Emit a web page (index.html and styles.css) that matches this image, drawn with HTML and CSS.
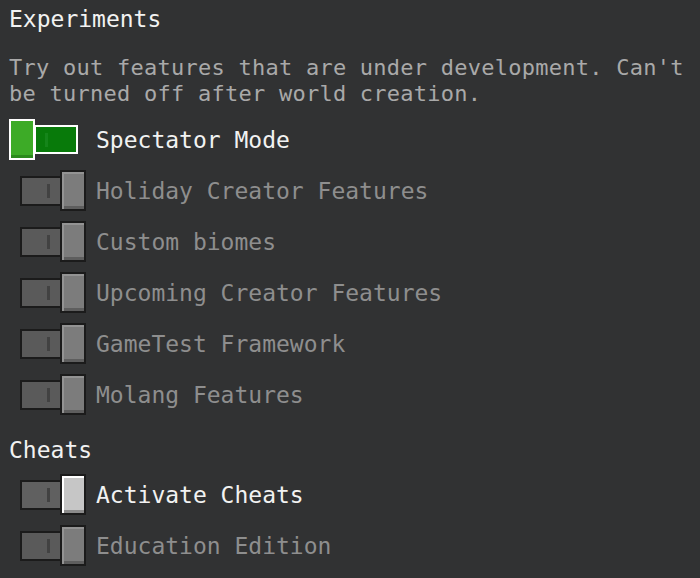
FILE: index.html
```html
<!DOCTYPE html>
<html lang="en">
<head>
    <meta charset="UTF-8">
    <title>World Settings - Experiments</title>
    <link rel="stylesheet" href="styles.css">
</head>
<body>

    <!-- Experiments -->
    <div class="heading">Experiments</div>
    <p class="desc">Try out features that are under development. Can't be turned off after world creation.</p>

    <div class="row">
        <div class="switch on focus"><span class="knob"></span><span class="track"><i></i></span></div>
        <span class="label">Spectator Mode</span>
    </div>
    <div class="row disabled">
        <div class="switch"><span class="track"><i></i></span><span class="knob"></span></div>
        <span class="label">Holiday Creator Features</span>
    </div>
    <div class="row disabled">
        <div class="switch"><span class="track"><i></i></span><span class="knob"></span></div>
        <span class="label">Custom biomes</span>
    </div>
    <div class="row disabled">
        <div class="switch"><span class="track"><i></i></span><span class="knob"></span></div>
        <span class="label">Upcoming Creator Features</span>
    </div>
    <div class="row disabled">
        <div class="switch"><span class="track"><i></i></span><span class="knob"></span></div>
        <span class="label">GameTest Framework</span>
    </div>
    <div class="row disabled">
        <div class="switch"><span class="track"><i></i></span><span class="knob"></span></div>
        <span class="label">Molang Features</span>
    </div>

    <!-- Cheats -->
    <div class="heading cheats">Cheats</div>

    <div class="row">
        <div class="switch"><span class="track"><i></i></span><span class="knob"></span></div>
        <span class="label">Activate Cheats</span>
    </div>
    <div class="row disabled">
        <div class="switch"><span class="track"><i></i></span><span class="knob"></span></div>
        <span class="label">Education Edition</span>
    </div>

</body>
</html>
```

FILE: styles.css
```css
/* Page */
body {
    margin: 0;
    padding: 0 0 0 9px;
    background-color: #313233;
    color: #ffffff;
    font-family: "DejaVu Sans Mono", "Liberation Mono", monospace;
    font-size: 23px;
}

/* Section titles */
.heading {
    line-height: 38px;
    color: #f2f2f2;
}

.heading.cheats {
    margin-top: 11px;
}

.desc {
    margin: 17px 0 7px;
    font-size: 22px;
    line-height: 26px;
    letter-spacing: 0.25px;
    color: #a9a9a9;
    max-width: 690px;
}

/* Toggle rows */
.row {
    display: flex;
    align-items: center;
    height: 51px;
    gap: 9px;
}

.label {
    color: #f2f2f2;
    white-space: nowrap;
}

.row.disabled .label {
    color: #8e8e8e;
}

/* Switch */
.switch {
    width: 78px;
    display: flex;
    align-items: center;
    padding-left: 11px;
    box-sizing: border-box;
}

.switch.on {
    padding-left: 0;
}

.track {
    width: 42px;
    height: 30px;
    box-sizing: border-box;
    border: 2px solid #1b1b1b;
    background-color: #606060;
    display: flex;
    align-items: center;
    justify-content: flex-end;
    padding-right: 10px;
}

.track i {
    width: 3px;
    height: 14px;
    background-color: #424242;
}

.knob {
    width: 26px;
    height: 41px;
    box-sizing: border-box;
    margin-left: -2px;
    border: 2px solid #1b1b1b;
    background-color: #c6c6c6;
    box-shadow: inset 2px 2px 0 #ffffff, inset 0 -3px 0 #8b8b8b;
}

.row.disabled .track {
    background-color: #5a5a5a;
}

.row.disabled .knob {
    background-color: #7c7c7c;
    box-shadow: inset 2px 2px 0 #939393, inset 0 -3px 0 #5e5e5e;
}

/* Switch turned on */
.switch.on .knob {
    margin-left: 0;
    border-color: #ffffff;
    background-color: #3dab27;
    box-shadow: inset 0 -3px 0 #2b8a1c;
}

.switch.on .track {
    width: 44px;
    height: 29px;
    margin-left: -1px;
    border-color: #ffffff;
    background-color: #087a0a;
    justify-content: flex-start;
    padding-left: 9px;
}

.switch.on .track i {
    background-color: #15851a;
}
```
